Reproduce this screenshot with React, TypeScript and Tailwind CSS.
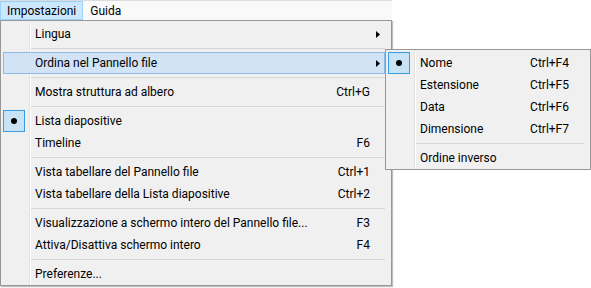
import React from 'react';

type Item =
  | { kind: 'sep' }
  | {
      kind: 'item';
      label: string;
      shortcut?: string;
      submenu?: boolean;
      checked?: boolean;
      active?: boolean;
    };

const mainItems: Item[] = [
  { kind: 'item', label: 'Lingua', submenu: true },
  { kind: 'sep' },
  { kind: 'item', label: 'Ordina nel Pannello file', submenu: true, active: true },
  { kind: 'sep' },
  { kind: 'item', label: 'Mostra struttura ad albero', shortcut: 'Ctrl+G' },
  { kind: 'sep' },
  { kind: 'item', label: 'Lista diapositive', checked: true },
  { kind: 'item', label: 'Timeline', shortcut: 'F6' },
  { kind: 'sep' },
  { kind: 'item', label: 'Vista tabellare del Pannello file', shortcut: 'Ctrl+1' },
  { kind: 'item', label: 'Vista tabellare della Lista diapositive', shortcut: 'Ctrl+2' },
  { kind: 'sep' },
  { kind: 'item', label: 'Visualizzazione a schermo intero del Pannello file...', shortcut: 'F3' },
  { kind: 'item', label: 'Attiva/Disattiva schermo intero', shortcut: 'F4' },
  { kind: 'sep' },
  { kind: 'item', label: 'Preferenze...' },
];

const sortItems: Item[] = [
  { kind: 'item', label: 'Nome', shortcut: 'Ctrl+F4', checked: true },
  { kind: 'item', label: 'Estensione', shortcut: 'Ctrl+F5' },
  { kind: 'item', label: 'Data', shortcut: 'Ctrl+F6' },
  { kind: 'item', label: 'Dimensione', shortcut: 'Ctrl+F7' },
  { kind: 'sep' },
  { kind: 'item', label: 'Ordine inverso' },
];

function MenuRow({ item }: { item: Item }) {
  if (item.kind === 'sep') {
    return (
      <div className="flex h-[7px] ml-[2px] mr-[6px]">
        <div className="w-[27px] shrink-0 border-r border-[#e2e2e2] shadow-[1px_0_0_#ffffff]" />
        <div className="flex-1 flex items-center pl-[1px]">
          <div className="h-px w-full bg-[#d7d7d7]" />
        </div>
      </div>
    );
  }

  return (
    <div
      className={`flex h-[22px] ml-[2px] mr-[6px] items-center ${
        item.active ? 'bg-[#d1e3f4] outline outline-1 -outline-offset-1 outline-[#8bbbe8]' : ''
      }`}
    >
      <div
        className={`w-[27px] h-full shrink-0 flex items-center ${
          item.active ? '' : 'border-r border-[#e2e2e2] shadow-[1px_0_0_#ffffff]'
        }`}
      >
        {item.checked && (
          <div className="w-[22px] h-[22px] flex items-center justify-center bg-[#c9e3f6] border border-[#3b9be0]">
            <div className="w-[6px] h-[6px] rounded-full bg-black" />
          </div>
        )}
      </div>
      <span className="flex-1 pl-[5px] whitespace-nowrap">{item.label}</span>
      {item.shortcut && <span className="whitespace-nowrap">{item.shortcut}</span>}
      <div className="w-[15px] h-full shrink-0 flex items-center pl-[6px]">
        {item.submenu && (
          <svg width="4" height="7" viewBox="0 0 4 7">
            <path d="M0 0L4 3.5L0 7z" fill="#000" />
          </svg>
        )}
      </div>
    </div>
  );
}

export default function App() {
  return (
    <div
      className="relative w-[591px] h-[288px] bg-white overflow-hidden text-[12px] text-black leading-none"
      style={{ fontFamily: 'Roboto, "Noto Sans", sans-serif' }}
    >
      {/* Menu bar */}
      <div className="flex w-[392px] h-[20px] bg-[#f9f9f9] border-t border-[#dcdcdc]">
        <div className="h-full px-[6px] flex items-center bg-[#cce8ff] border border-[#99d1ff]">
          Impostazioni
        </div>
        <div className="h-full px-[7px] flex items-center">Guida</div>
      </div>

      {/* Impostazioni menu */}
      <div className="w-[392px] bg-[#f0f0f0] border border-[#979797] pt-[2px] shadow-[1px_1px_1px_rgba(0,0,0,0.25)]">
        {mainItems.map((item, i) => (
          <MenuRow key={i} item={item} />
        ))}
      </div>

      {/* Ordina submenu */}
      <div className="absolute left-[385px] top-[49px] w-[206px] bg-[#f0f0f0] border border-[#979797] pt-[2px]">
        {sortItems.map((item, i) => (
          <MenuRow key={i} item={item} />
        ))}
      </div>
    </div>
  );
}
